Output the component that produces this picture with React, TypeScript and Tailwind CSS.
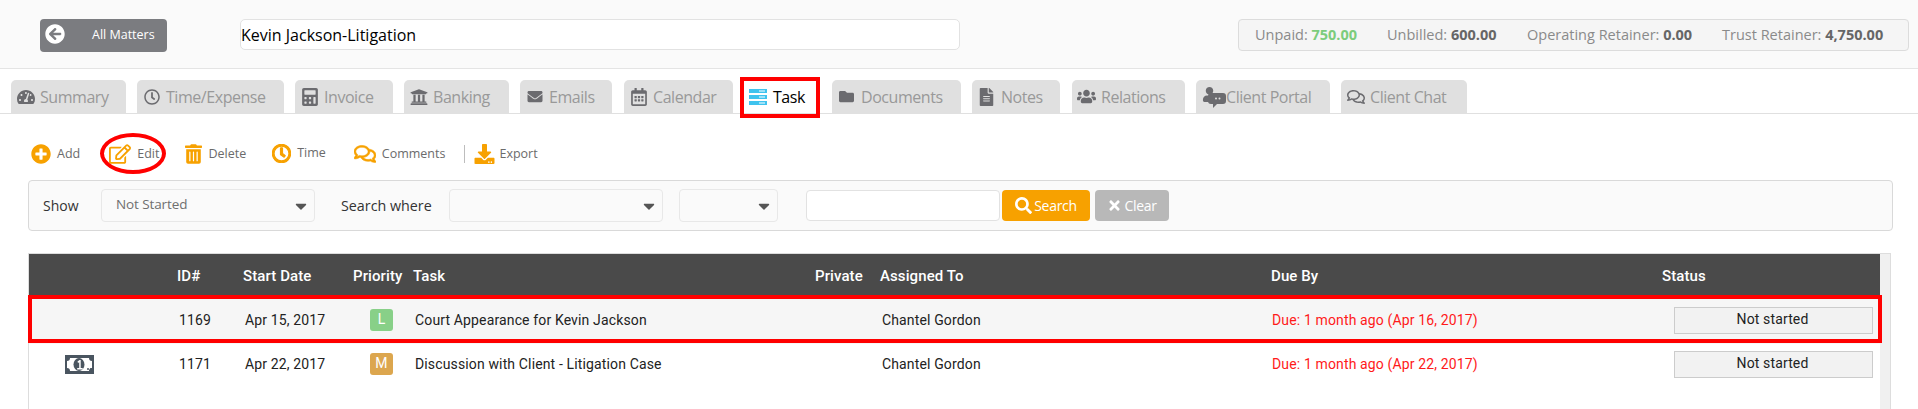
import React from "react";
import {
  FaTachometerAlt, FaRegClock, FaCalculator, FaUniversity, FaEnvelope, FaRegCalendarAlt,
  FaFolder, FaFileAlt, FaUsers, FaUser, FaRegComments, FaPlusCircle, FaRegEdit, FaTrashAlt,
  FaDownload, FaSearch, FaTimes, FaArrowCircleLeft, FaCaretDown,
} from "react-icons/fa";

const tabs: { label: string; w: string; ml: string; icon: React.ReactNode }[] = [
  { label: "Summary", w: "w-[115px]", ml: "ml-[11px]", icon: <FaTachometerAlt className="w-[18px] h-[16px]" /> },
  { label: "Time/Expense", w: "w-[147px]", ml: "ml-[11px]", icon: <FaRegClock className="w-[16px] h-[16px]" /> },
  { label: "Invoice", w: "w-[98px]", ml: "ml-[11px]", icon: <FaCalculator className="w-[16px] h-[18px]" /> },
  { label: "Banking", w: "w-[105px]", ml: "ml-[11px]", icon: <FaUniversity className="w-[18px] h-[18px]" /> },
  { label: "Emails", w: "w-[92px]", ml: "ml-[11px]", icon: <FaEnvelope className="w-[18px] h-[15px]" /> },
  { label: "Calendar", w: "w-[109px]", ml: "ml-[12px]", icon: <FaRegCalendarAlt className="w-[16px] h-[18px]" /> },
];
const tabs2: { label: string; w: string; ml: string; icon: React.ReactNode }[] = [
  { label: "Documents", w: "w-[129px]", ml: "ml-[12px]", icon: <FaFolder className="w-[17px] h-[15px]" /> },
  { label: "Notes", w: "w-[88px]", ml: "ml-[11px]", icon: <FaFileAlt className="w-[15px] h-[18px]" /> },
  { label: "Relations", w: "w-[113px]", ml: "ml-[12px]", icon: <FaUsers className="w-[19px] h-[17px]" /> },
];

function Tab({ label, w, ml, icon }: { label: string; w: string; ml: string; icon: React.ReactNode }) {
  return (
    <div className={`${w} ${ml} h-[33px] bg-[#e0e0e0] rounded-t-[5px] flex items-center pl-[5px] gap-[5px] text-[16px] tracking-[-0.45px] text-[#999999] shrink-0`}>
      <span className="text-[#6b6b6f] flex items-center justify-center w-[19px]">{icon}</span>
      <span>{label}</span>
    </div>
  );
}

function Tool({ icon, label, ml, gap = "gap-[6px]" }: { icon: React.ReactNode; label: string; ml: string; gap?: string }) {
  return (
    <div className={`flex items-center ${gap} ${ml} text-[12.5px] text-[#6b6b6b]`}>
      <span className="text-[#f7a100] flex items-center">{icon}</span>
      <span>{label}</span>
    </div>
  );
}

function Select({ w, ml, text }: { w: string; ml: string; text?: string }) {
  return (
    <div className={`${w} ${ml} h-[33px] rounded-[4px] border border-[#e8e8e8] bg-[#fafafa] flex items-center justify-between pl-[14px] pr-[4px] text-[13.5px] tracking-[-0.1px] text-[#6f6f6f]`}>
      <span className="-mt-[2px]">{text}</span>
      <FaCaretDown className="w-[18px] h-[18px] text-[#555555]" />
    </div>
  );
}

const grid = "grid grid-cols-[148px_66px_110px_60px_402px_65px_391px_391px_218px] items-center";

function MoneyIcon() {
  return (
    <svg width="29" height="19" viewBox="0 0 29 19">
      <path d="M0 0h29v19H0z" fill="#4a5560" />
      <path d="M5 3h19a3 3 0 0 0 3 3v7a3 3 0 0 0-3 3H5a3 3 0 0 0-3-3V6a3 3 0 0 0 3-3z" fill="#ffffff" />
      <ellipse cx="14" cy="9.5" rx="5.5" ry="6.5" fill="#4a5560" />
      <path d="M12.5 6.5l2-1.5h1.2v8h2v1.5h-5.5V13h2V7.2l-1.2.8z" fill="#ffffff" />
      <circle cx="23" cy="14" r="1" fill="#4a5560" />
      <circle cx="26" cy="14" r="1" fill="#4a5560" />
    </svg>
  );
}

function Row({ id, date, badge, badgeColor, task, due, bg, icon, h }: { id: string; date: string; badge: string; badgeColor: string; task: string; due: string; bg: string; icon?: boolean; h: string }) {
  return (
    <div className={`${grid} ${bg} ${h} font-['Roboto',sans-serif] text-[14px] tracking-[0.14px] text-[#222222]`}>
      <div className="flex justify-start pl-[36px]">
        {icon && <MoneyIcon />}
      </div>
      <div className="pl-[2px]">{id}</div>
      <div className="pl-[2px]">{date}</div>
      <div className="pl-[17px]">
        <div className={`w-[23px] h-[22px] rounded-[3px] ${badgeColor} text-white flex items-center justify-center text-[14px] pb-[2px]`}>{badge}</div>
      </div>
      <div className="pl-[2px]">{task}</div>
      <div />
      <div className="pl-[2px]">Chantel Gordon</div>
      <div className="pl-[1px] text-[#ff1a1a]">{due}</div>
      <div className="pl-[12px] pr-[7px]">
        <div className="h-[27px] bg-[#f2f2f2] border border-[#cccccc] flex items-center justify-center pb-[2px] pr-[2px]">Not started</div>
      </div>
    </div>
  );
}

export default function App() {
  return (
    <div className="h-[409px] w-[1918px] bg-white overflow-hidden font-['Open_Sans',sans-serif] relative">
      {/* top header */}
      <div className="h-[69px] bg-[#fafafa] border-b border-[#e4e4e4] flex items-start pt-[19px]">
        <div className="ml-[40px] w-[127px] h-[33px] bg-[#7b7c80] rounded-[4px] flex items-center text-white text-[12.5px]">
          <FaArrowCircleLeft className="ml-[5px] -mt-[4px] w-[20px] h-[20px]" />
          <span className="ml-[27px] -mt-[1px]">All Matters</span>
        </div>
        <div className="ml-[73px] w-[720px] h-[31px] bg-white border border-[#e2e2e2] rounded-[5px] flex items-center text-[16px] text-black">
          Kevin Jackson-Litigation
        </div>
        <div className="ml-[278px] w-[671px] h-[32px] bg-[#f5f5f5] border border-[#dcdcdc] rounded-[4px] flex items-center pl-[16px] text-[14.5px] text-[#8a8a8a]">
          <span className="w-[132px]">Unpaid: <b className="text-[#7ccc7c]">750.00</b></span>
          <span className="w-[140px]">Unbilled: <b className="text-[#666666]">600.00</b></span>
          <span className="w-[195px]">Operating Retainer: <b className="text-[#666666]">0.00</b></span>
          <span>Trust Retainer: <b className="text-[#666666]">4,750.00</b></span>
        </div>
      </div>

      {/* tabs */}
      <div className="h-[45px] pt-[11px] border-b border-[#e0e0e0] flex items-start">
        {tabs.map((t) => <Tab key={t.label} {...t} />)}
        <div className="w-[80px] ml-[7px] h-[33px] flex items-center pl-[9px] gap-[6px] text-[16px] tracking-[-0.45px] text-black bg-white shrink-0">
          <svg width="18" height="16" viewBox="0 0 18 16">
            <rect x="0" y="0" width="18" height="4" fill="#3fc3ee" />
            <rect x="0" y="6" width="18" height="4" fill="#3fc3ee" />
            <rect x="0" y="12" width="18" height="4" fill="#3fc3ee" />
            <rect x="10" y="1.5" width="6" height="1" fill="#fff" />
            <rect x="10" y="7.5" width="6" height="1" fill="#fff" />
            <rect x="10" y="13.5" width="6" height="1" fill="#fff" />
          </svg>
          <span>Task</span>
        </div>
        {tabs2.map((t) => <Tab key={t.label} {...t} />)}
        <div className="w-[134px] ml-[11px] h-[33px] bg-[#e0e0e0] rounded-t-[5px] flex items-center pl-[5px] text-[16px] tracking-[-0.45px] text-[#999999] shrink-0">
          <span className="relative w-[25px] h-[20px] text-[#6b6b6f] shrink-0">
            <FaUser className="absolute left-[1px] top-0 w-[15px] h-[15px]" />
            <svg className="absolute left-[7px] top-[6px]" width="18" height="15" viewBox="0 0 18 15">
              <path d="M3 0h12a3 3 0 0 1 3 3v5a3 3 0 0 1-3 3H9l-4 4v-4H3a3 3 0 0 1-3-3V3a3 3 0 0 1 3-3z" fill="#6b6b6f" />
              <circle cx="8" cy="5.5" r="1" fill="#e0e0e0" />
              <circle cx="11.5" cy="5.5" r="1" fill="#e0e0e0" />
            </svg>
          </span>
          <span>Client Portal</span>
        </div>
        <Tab label="Client Chat" w="w-[126px]" ml="ml-[11px]" icon={<FaRegComments className="w-[18px] h-[16px]" />} />
      </div>

      {/* toolbar */}
      <div className="h-[66px] flex items-start pt-[30px]">
        <Tool ml="ml-[31px]" icon={<FaPlusCircle className="w-[20px] h-[20px]" />} label="Add" />
        <Tool ml="ml-[29px]" icon={<FaRegEdit className="w-[22px] h-[20px]" />} label="Edit" />
        <Tool ml="ml-[26px]" icon={<FaTrashAlt className="w-[17px] h-[20px]" />} label="Delete" />
        <Tool ml="ml-[26px]" icon={<FaRegClock className="w-[19px] h-[19px]" stroke="currentColor" strokeWidth={30} />} label="Time" />
        <Tool ml="ml-[28px]" icon={<FaRegComments className="w-[22px] h-[20px]" stroke="currentColor" strokeWidth={15} />} label="Comments" />
        <div className="ml-[19px] mt-[1px] w-px h-[18px] bg-[#bdbdbd]" />
        <Tool ml="ml-[7px]" gap="gap-[2px]" icon={<FaDownload className="w-[25px] h-[20px]" />} label="Export" />
      </div>

      {/* filter panel */}
      <div className="mx-[28px] w-[1865px] h-[51px] bg-[#fafafa] border border-[#d9d9d9] rounded-[4px] flex items-center">
        <span className="ml-[14px] w-[58px] text-[14px] text-[#333333]">Show</span>
        <Select w="w-[214px]" ml="ml-0" text="Not Started" />
        <span className="ml-[26px] w-[108px] text-[14.3px] text-[#333333]">Search where</span>
        <Select w="w-[214px]" ml="ml-0" />
        <Select w="w-[99px]" ml="ml-[16px]" />
        <div className="ml-[28px] w-[194px] h-[31px] bg-white border border-[#e2e2e2] rounded-[4px]" />
        <div className="ml-[2px] w-[88px] h-[31px] bg-[#f7a100] rounded-[4px] flex items-center justify-center gap-[2px] text-white text-[14px] tracking-[-0.3px]">
          <FaSearch className="w-[17px] h-[17px]" /> Search
        </div>
        <div className="ml-[5px] w-[74px] h-[31px] bg-[#b8b8b8] rounded-[4px] flex items-center justify-center gap-[2px] text-white text-[14px] tracking-[-0.3px]">
          <FaTimes className="w-[15px] h-[15px]" /> Clear
        </div>
      </div>

      {/* table */}
      <div className="mt-[22px] ml-[28px] w-[1863px] h-[156px] border-x border-t border-[#dddddd] bg-white flex">
        <div className="w-[1851px]">
          <div className={`${grid} h-[42px] pt-[2px] bg-[#4a4a4a] text-white font-['Roboto',sans-serif] text-[15px] tracking-[0.1px] font-medium`}>
            <div />
            <div>ID#</div>
            <div>Start Date</div>
            <div>Priority</div>
            <div>Task</div>
            <div>Private</div>
            <div>Assigned To</div>
            <div>Due By</div>
            <div>Status</div>
          </div>
          <Row h="h-[48px]" bg="bg-[#f6f6f6]" id="1169" date="Apr 15, 2017" badge="L" badgeColor="bg-[#88d088]" task="Court Appearance for Kevin Jackson" due="Due: 1 month ago (Apr 16, 2017)" />
          <Row h="h-[40px]" bg="bg-white" icon id="1171" date="Apr 22, 2017" badge="M" badgeColor="bg-[#dca64e]" task="Discussion with Client - Litigation Case" due="Due: 1 month ago (Apr 22, 2017)" />
        </div>
        <div className="w-[11px] bg-[#f0f0f0]" />
      </div>

      {/* annotations */}
      <div className="absolute left-[740px] top-[77px] w-[80px] h-[41px] border-[4px] border-[#ff0000]" />
      <div className="absolute left-[100px] top-[133px] w-[66px] h-[41px] rounded-[50%] border-[4px] border-[#ff0000]" />
      <div className="absolute left-[28px] top-[295px] w-[1854px] h-[48px] border-[4px] border-[#ff0000]" />
    </div>
  );
}
